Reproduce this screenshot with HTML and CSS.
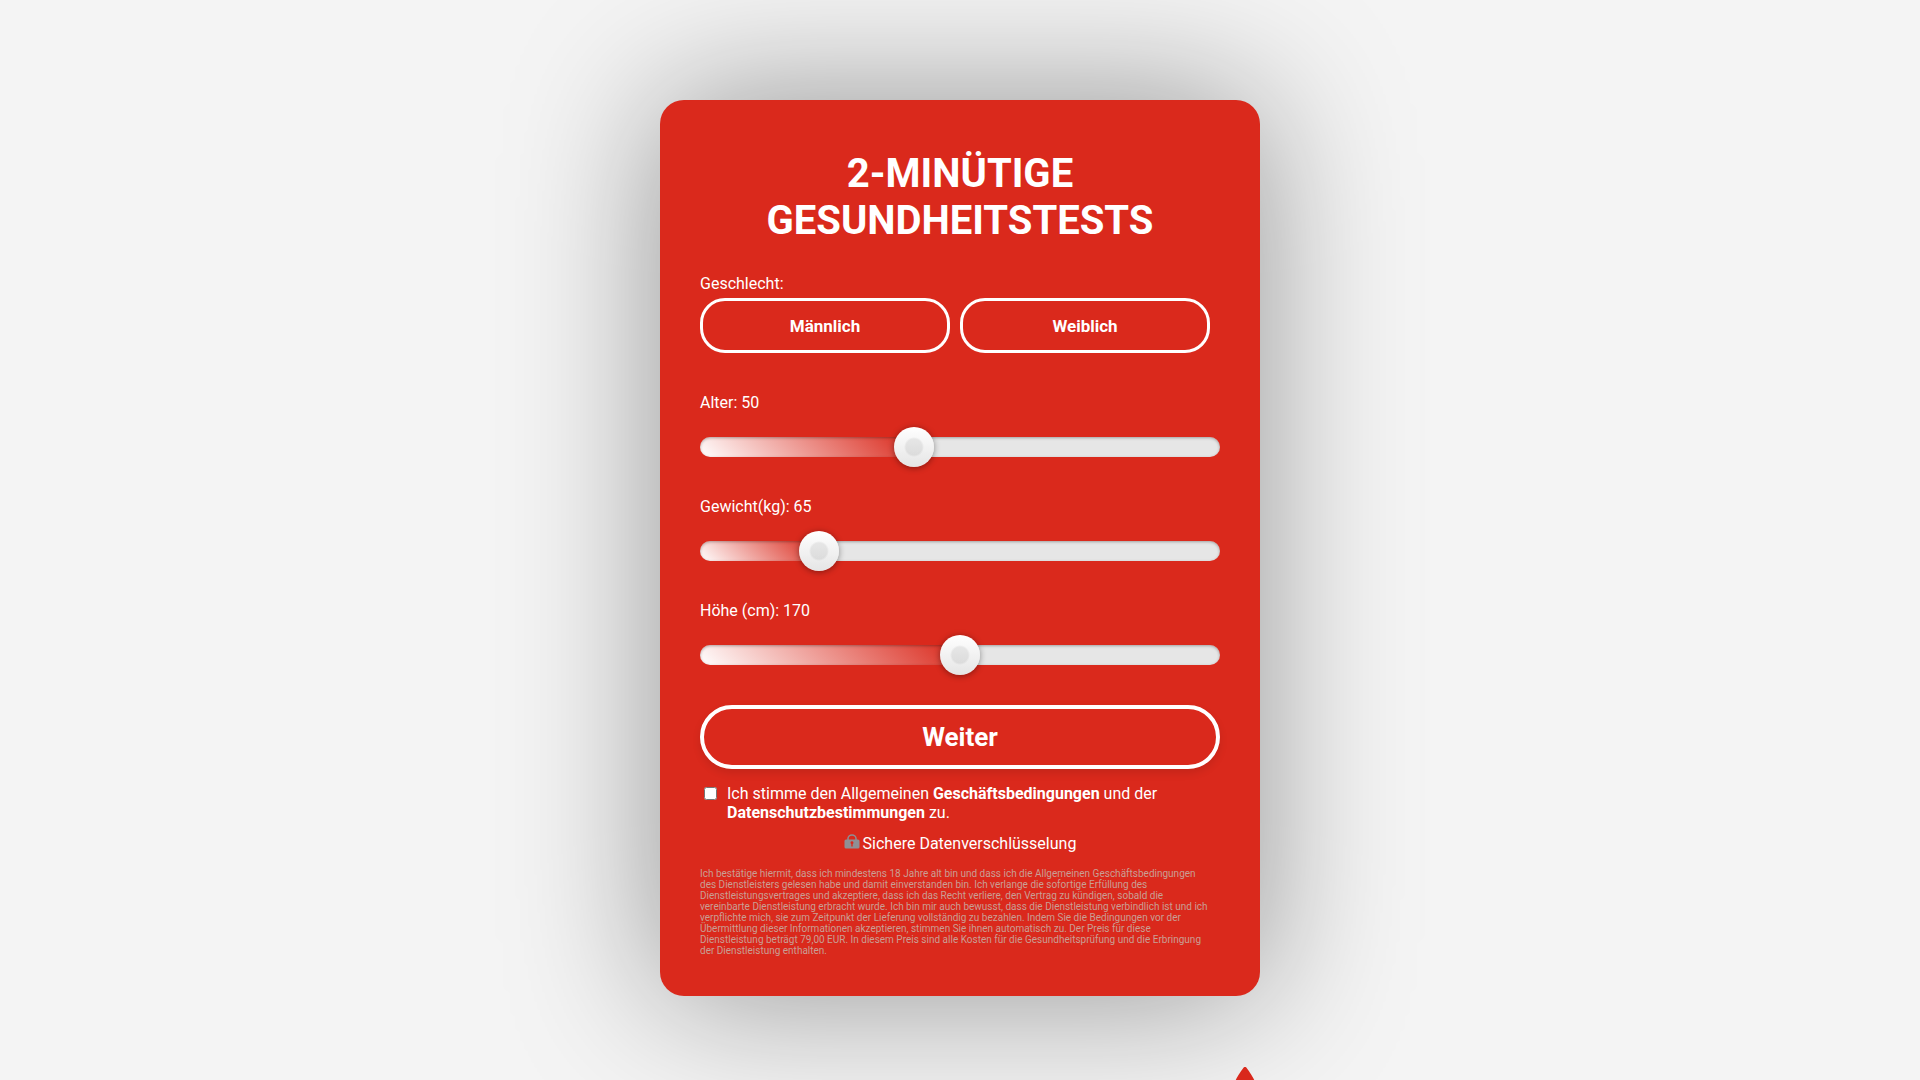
FILE: index.html
```
<!DOCTYPE html>
<html lang="de">
<head>
    <meta charset="UTF-8">
    <meta name="viewport" content="width=device-width, initial-scale=1.0">
    <title>2-minütige Gesundheitstests</title>
    <link rel="stylesheet" href="styles.css">
</head>
<body>
    <main class="page">
        <form class="card" id="health-form">
            <h1>2-MINÜTIGE GESUNDHEITSTESTS</h1>

            <div class="field-label" id="gender-label">Geschlecht:</div>
            <div class="gender" role="group" aria-labelledby="gender-label">
                <button type="button">Männlich</button>
                <button type="button">Weiblich</button>
            </div>

            <div class="field">
                <label for="age">Alter: <span>50</span></label>
                <input type="range" id="age" min="16" max="100" value="50">
            </div>
            <div class="field">
                <label for="weight">Gewicht(kg): <span>65</span></label>
                <input type="range" id="weight" min="30" max="200" value="65">
            </div>
            <div class="field">
                <label for="height">Höhe (cm): <span>170</span></label>
                <input type="range" id="height" min="120" max="220" value="170">
            </div>

            <button type="submit" class="submit">Weiter</button>

            <div class="consent">
                <input type="checkbox" id="consent">
                <label for="consent">Ich stimme den Allgemeinen <a href="#terms">Geschäftsbedingungen</a> und der <a href="#privacy">Datenschutzbestimmungen</a> zu.</label>
            </div>

            <div class="secure">
                <svg class="lock" viewBox="0 0 16 16" aria-hidden="true">
                    <path d="M4 7V4.500a4 3.500 0 0 1 8 0V7" fill="none" stroke="#8f8f94" stroke-width="1.500"/>
                    <rect x="0.500" y="5.500" width="15" height="9" rx="1.500" fill="#8f8f94"/>
                    <path d="M6.500 8.800a1.500 1.500 0 1 1 2.200 1.200v2.500H7.300V10a1.500 1.500 0 0 1-.8-1.200z" fill="#d9281c"/>
                </svg>
                <span>Sichere Datenverschlüsselung</span>
            </div>

            <p class="legal">Ich bestätige hiermit, dass ich mindestens 18 Jahre alt bin und dass ich die Allgemeinen Geschäftsbedingungen des Dienstleisters gelesen habe und damit einverstanden bin. Ich verlange die sofortige Erfüllung des Dienstleistungsvertrages und akzeptiere, dass ich das Recht verliere, den Vertrag zu kündigen, sobald die vereinbarte Dienstleistung erbracht wurde. Ich bin mir auch bewusst, dass die Dienstleistung verbindlich ist und ich verpflichte mich, sie zum Zeitpunkt der Lieferung vollständig zu bezahlen. Indem Sie die Bedingungen vor der Übermittlung dieser Informationen akzeptieren, stimmen Sie ihnen automatisch zu. Der Preis für diese Dienstleistung beträgt 79,00 EUR. In diesem Preis sind alle Kosten für die Gesundheitsprüfung und die Erbringung der Dienstleistung enthalten.</p>
        </form>

        <div class="below">
            <svg class="drop" viewBox="0 0 60 80" aria-hidden="true">
                <path d="M30 0c2 0 3 1 4 3 5 6 22 31 22 48a26 26 0 0 1-52 0C4 34 21 9 26 3c1-2 2-3 4-3z" fill="#d9281c"/>
            </svg>
        </div>
    </main>

    <script>
        // Keep the filled part of each slider and its number in step with the value
        document.querySelectorAll('input[type="range"]').forEach((slider) => {
            const output = document.querySelector(`label[for="${slider.id}"] span`);

            function update() {
                const ratio = (slider.value - slider.min) / (slider.max - slider.min);
                slider.style.setProperty('--ratio', ratio);
                output.textContent = slider.value;
            }

            slider.addEventListener('input', update);
            update();
        });

        document.getElementById('health-form').addEventListener('submit', (event) => {
            event.preventDefault();
        });
    </script>
</body>
</html>
```
FILE: styles.css
```
* {
    box-sizing: border-box;
}

html {
    height: 100%;
}

body {
    margin: 0;
    height: 100%;
    overflow: hidden;
    background-color: #f4f4f4;
    font-family: Roboto, sans-serif;
    font-size: 16px;
    color: #fff;
}

.page {
    max-width: 600px;
    margin: 0 auto;
    padding-top: 100px;
}

.card {
    padding: 40px;
    background-color: #da291c;
    border-radius: 24px;
    box-shadow: 0 0 150px rgba(0, 0, 0, 0.4);
}

h1 {
    margin: 10px 0 30px;
    font-size: 40px;
    line-height: 47px;
    text-align: center;
}

label,
.field-label {
    line-height: 19px;
}

.gender {
    display: flex;
    gap: 10px;
    margin: 5px 10px 40px 0;
}

.gender button {
    flex: 1;
    height: 55px;
    border: 3px solid #fff;
    border-radius: 25px;
    background: transparent;
    color: #fff;
    font: bold 17px Roboto, sans-serif;
    cursor: pointer;
}

.field {
    height: 104px;
}

.field label {
    display: block;
    margin-bottom: 15px;
}

input[type="range"] {
    -webkit-appearance: none;
    appearance: none;
    display: block;
    width: 100%;
    height: 40px;
    margin: 0;
    background: transparent;
    cursor: pointer;
}

input[type="range"]::-webkit-slider-runnable-track {
    height: 20px;
    border-radius: 10px;
    background:
        linear-gradient(45deg, #fff, #da291c) 0 0 / calc(20px + (100% - 40px) * var(--ratio)) 100% no-repeat,
        #e6e6e6;
    box-shadow: inset 0 1px 3px rgba(0, 0, 0, 0.3);
}

input[type="range"]::-webkit-slider-thumb {
    -webkit-appearance: none;
    width: 40px;
    height: 40px;
    margin-top: -10px;
    border: 1px solid transparent;
    border-radius: 50%;
    background:
        radial-gradient(circle, rgba(0, 0, 0, 0.07) 8px, transparent 10px),
        linear-gradient(#fff, #e5e5e5);
    background-origin: border-box;
    box-shadow: 0 1px 6px rgba(0, 0, 0, 0.4);
}

.submit {
    display: block;
    width: 100%;
    height: 64px;
    border: 4px solid #fff;
    border-radius: 32px;
    background: transparent;
    color: #fff;
    font: bold 26px Roboto, sans-serif;
    box-shadow: 0 4px 8px rgba(0, 0, 0, 0.1);
    cursor: pointer;
}

.consent {
    display: flex;
    align-items: flex-start;
    gap: 10px;
    margin: 15px 0 12px 4px;
}

.consent input {
    flex: none;
    width: 13px;
    height: 13px;
    margin: 3px 0 0;
}

.consent a {
    color: #fff;
    font-weight: bold;
    text-decoration: none;
}

.secure {
    display: flex;
    justify-content: center;
    gap: 3px;
    line-height: 19px;
}

.lock {
    width: 16px;
    height: 16px;
}

.legal {
    margin: 15px 10px 0 0;
    font-size: 10px;
    line-height: 11px;
    color: #c99f94;
}

.below {
    display: flex;
    justify-content: flex-end;
    margin-top: 71px;
}

.drop {
    width: 30px;
    height: 40px;
}
```
